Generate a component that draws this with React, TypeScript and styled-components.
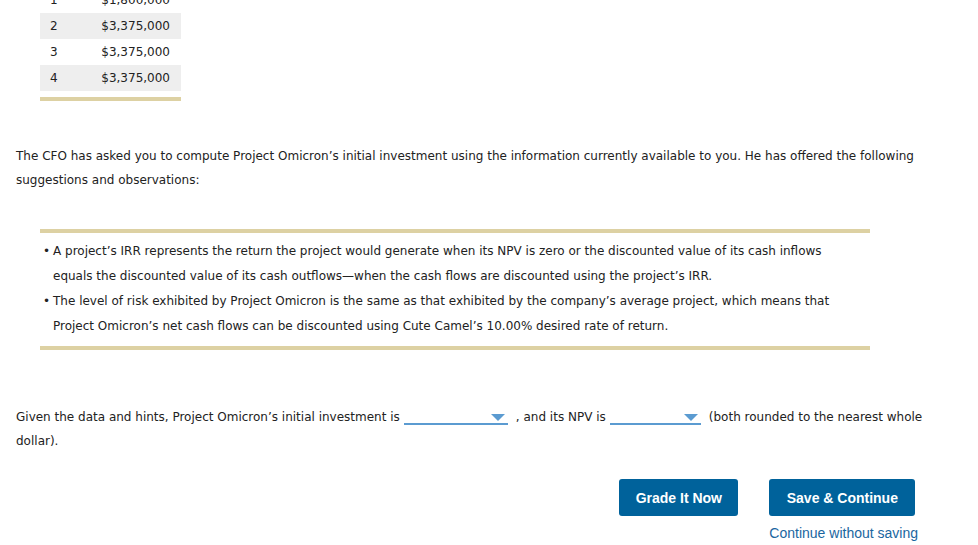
import React from 'react'
import styled, { createGlobalStyle } from 'styled-components'

const GlobalStyle = createGlobalStyle`
    html, body {
        margin: 0;
        padding: 0;
        background: #ffffff;
    }
    body {
        font-family: "DejaVu Sans", Verdana, sans-serif;
        font-size: 12px;
        color: #222222;
        overflow: hidden;
    }
`

// page is scrolled a little, so the first table row is cut off at the top
const Page = styled.div`
    margin-top: -13px;
    padding: 0 16px;
    width: 946px;
`

const CashTable = styled.table`
    border-collapse: collapse;
    margin-left: 24px;
    width: 141px;
`

const Row = styled.tr<{ $shaded?: boolean }>`
    height: 26px;
    background: ${({ $shaded }) => ($shaded ? '#eeeeee' : 'transparent')};
`

const YearCell = styled.td`
    width: 24px;
    padding: 0 0 0 10px;
    text-align: left;
`

const AmountCell = styled.td`
    padding: 0 11px 0 0;
    text-align: right;
`

const Rule = styled.div<{ $width: number }>`
    width: ${({ $width }) => $width}px;
    height: 4px;
    background: #ddd1a3;
    margin-left: 24px;
`

const Spacer = styled.div<{ $height: number }>`
    height: ${({ $height }) => $height}px;
`

const Paragraph = styled.p<{ $top: number }>`
    margin: ${({ $top }) => $top}px 0 0;
    line-height: 24px;
`

const HintBox = styled.div`
    margin-top: 37px;
`

const HintList = styled.ul`
    list-style: none;
    margin: 0;
    padding: 6px 10px 7px 24px;
    width: 796px;
`

const HintItem = styled.li`
    position: relative;
    padding-left: 13px;
    line-height: 24.5px;
    margin-bottom: 1px;

    &::before {
        content: '•';
        position: absolute;
        left: 3px;
        top: 0;
    }
`

const Question = styled.p`
    margin: 55px 0 0;
    line-height: 24px;
`

const Dropdown = styled.span<{ $width: number }>`
    display: inline-block;
    position: relative;
    width: ${({ $width }) => $width}px;
    height: 14px;
    margin: 0 8px 0 4px;
    border-bottom: 2px solid #5b9bd1;
    vertical-align: -4px;
`

const Caret = styled.span`
    position: absolute;
    right: 3px;
    top: 5px;
    width: 0;
    height: 0;
    border-left: 7px solid transparent;
    border-right: 7px solid transparent;
    border-top: 7px solid #5b9bd1;
`

const Actions = styled.div`
    display: flex;
    justify-content: flex-end;
    gap: 31px;
    margin-top: 26px;
    padding-right: 44px;
`

const ActionColumn = styled.div`
    display: flex;
    flex-direction: column;
    align-items: flex-start;
`

const Button = styled.button<{ $width: number }>`
    width: ${({ $width }) => $width}px;
    height: 37px;
    border: none;
    border-radius: 3px;
    background: #00629b;
    color: #ffffff;
    font-family: "Liberation Sans", Arial, sans-serif;
    font-size: 14px;
    font-weight: bold;
    cursor: pointer;
`

const TextLink = styled.a`
    margin-top: 9px;
    font-family: "Liberation Sans", Arial, sans-serif;
    font-size: 14px;
    color: #1a66a0;
    text-decoration: none;
`

const cashFlows = [
    { year: 1, amount: '$1,800,000' },
    { year: 2, amount: '$3,375,000' },
    { year: 3, amount: '$3,375,000' },
    { year: 4, amount: '$3,375,000' }
]

export default function App() {
    return (
        <>
            <GlobalStyle />
            <Page>
                <CashTable>
                    <tbody>
                        {cashFlows.map((row, i) => (
                            <Row key={row.year} $shaded={i % 2 === 1}>
                                <YearCell>{row.year}</YearCell>
                                <AmountCell>{row.amount}</AmountCell>
                            </Row>
                        ))}
                    </tbody>
                </CashTable>
                <Spacer $height={6} />
                <Rule $width={141} />

                <Paragraph $top={43}>
                    The CFO has asked you to compute Project Omicron’s initial investment using the information currently
                    available to you. He has offered the following suggestions and observations:
                </Paragraph>

                <HintBox>
                    <Rule $width={830} />
                    <HintList>
                        <HintItem>
                            A project’s IRR represents the return the project would generate when its NPV is zero or the
                            discounted value of its cash inflows equals the discounted value of its cash outflows—when the
                            cash flows are discounted using the project’s IRR.
                        </HintItem>
                        <HintItem>
                            The level of risk exhibited by Project Omicron is the same as that exhibited by the company’s
                            average project, which means that Project Omicron’s net cash flows can be discounted using Cute
                            Camel’s 10.00% desired rate of return.
                        </HintItem>
                    </HintList>
                    <Rule $width={830} />
                </HintBox>

                <Question>
                    Given the data and hints, Project Omicron’s initial investment is
                    <Dropdown $width={104}>
                        <Caret />
                    </Dropdown>
                    , and its NPV is
                    <Dropdown $width={91}>
                        <Caret />
                    </Dropdown>
                    (both rounded to the nearest whole dollar).
                </Question>

                <Actions>
                    <ActionColumn>
                        <Button $width={119}>Grade It Now</Button>
                    </ActionColumn>
                    <ActionColumn>
                        <Button $width={146}>Save &amp; Continue</Button>
                        <TextLink href="#">Continue without saving</TextLink>
                    </ActionColumn>
                </Actions>
            </Page>
        </>
    )
}
